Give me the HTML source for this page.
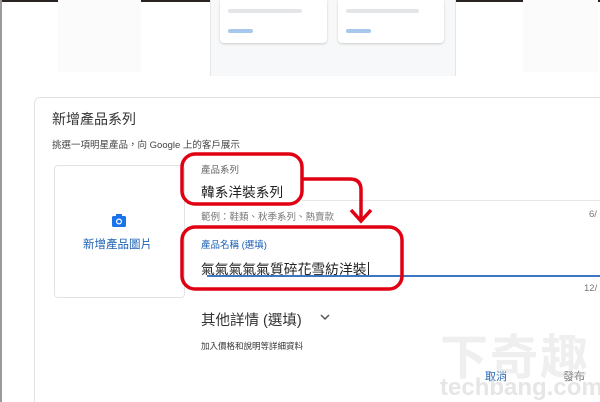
<!DOCTYPE html>
<html><head><meta charset="utf-8"><style>
html,body{margin:0;width:600px;height:402px;overflow:hidden}
body{background:#fff;position:relative;font-family:"Liberation Sans","Noto Sans CJK TC",sans-serif}
.a{position:absolute;white-space:nowrap}
</style></head><body>
<div class="a" style="left:0;top:0;width:600px;height:2px;background:#2a2522"></div>
<div class="a" style="left:0;top:0;width:2px;height:402px;background:#9a9a9a"></div>
<div class="a" style="left:58px;top:0;width:83px;height:72px;background:#fbfbfb"></div>
<div class="a" style="left:523px;top:0;width:75px;height:72px;background:#fbfbfb"></div>
<div class="a" style="left:210px;top:0;width:244px;height:76px;background:#f7f8f9;border-left:1px solid #e6e6e6;border-right:1px solid #e6e6e6"></div>
<div class="a" style="left:220px;top:0;width:107px;height:43px;background:#fff;border-radius:0 0 4px 4px;box-shadow:0 1px 2px #ccc"></div>
<div class="a" style="left:338px;top:0;width:106px;height:43px;background:#fff;border-radius:0 0 4px 4px;box-shadow:0 1px 2px #ccc"></div>
<div class="a" style="left:228px;top:9px;width:74px;height:4px;background:#e3e5e8;border-radius:2px"></div>
<div class="a" style="left:346px;top:9px;width:73px;height:4px;background:#e3e5e8;border-radius:2px"></div>
<div class="a" style="left:228px;top:29px;width:25px;height:4px;background:#a8c7ec;border-radius:2px"></div>
<div class="a" style="left:346px;top:29px;width:25px;height:4px;background:#a8c7ec;border-radius:2px"></div>

<div class="a" style="left:34px;top:97px;width:565px;height:305px;border:1px solid #e3e3e3;border-bottom:none;border-right:none;border-radius:6px 0 0 0;background:#fff"></div>
<div class="a" style="left:52px;top:109px;font-size:14px;color:#333">新增產品系列</div>
<div class="a" style="left:52px;top:137px;font-size:9.5px;color:#444">挑選一項明星產品，向 Google 上的客戶展示</div>
<div class="a" style="left:54px;top:165px;width:129px;height:131px;border:1px solid #e3e3e3;border-radius:4px"></div>
<svg class="a" style="left:112px;top:214px" width="14" height="13" viewBox="0 0 14 13"><rect x="0" y="2" width="14" height="11" rx="1.5" fill="#1a73e8"/><rect x="4" y="0" width="6" height="3" fill="#1a73e8"/><circle cx="7" cy="7.5" r="3" fill="#fff"/><circle cx="7" cy="7.5" r="1.8" fill="#1a73e8"/></svg>
<div class="a" style="left:83px;top:236px;font-size:11.5px;color:#1a5fb4">新增產品圖片</div>

<div class="a" style="left:201px;top:162px;font-size:9.5px;color:#666">產品系列</div>
<div class="a" style="left:201px;top:181px;font-size:13.7px;color:#222">韓系洋裝系列</div>
<div class="a" style="left:302px;top:200px;width:298px;height:1px;background:#e6e6e6"></div>
<div class="a" style="left:201px;top:209px;font-size:9.5px;color:#777">範例：鞋類、秋季系列、熱賣款</div>
<div class="a" style="left:589px;top:209px;font-size:9.5px;color:#777">6/</div>
<div class="a" style="left:201px;top:237px;font-size:9.5px;color:#1a5fb4">產品名稱 (選填)</div>
<div class="a" style="left:201px;top:258px;font-size:13.8px;color:#222">氣氣氣氣氣質碎花雪紡洋裝<span style="border-left:1px solid #222;margin-left:1px"></span></div>
<div class="a" style="left:207px;top:275px;width:393px;height:2px;background:#3d77c2"></div>
<div class="a" style="left:584px;top:283px;font-size:9.5px;color:#777">12/</div>
<div class="a" style="left:201px;top:309px;font-size:14.5px;color:#333">其他詳情 (選填)</div>
<svg class="a" style="left:320px;top:314px" width="10" height="7"><path d="M1 1 L5 5 L9 1" stroke="#555" stroke-width="1.5" fill="none"/></svg>
<div class="a" style="left:201px;top:340px;font-size:8.5px;color:#333">加入價格和說明等詳細資料</div>
<div class="a" style="left:485px;top:368px;font-size:11px;color:#1a5fb4">取消</div>
<div class="a" style="left:563px;top:368px;font-size:11px;color:#666">發布</div>
<div class="a" style="left:440px;top:335px;font-size:48px;line-height:48px;color:rgba(215,215,215,0.4);font-weight:bold;letter-spacing:2px">下奇趣</div>
<div class="a" style="left:440px;top:376px;font-size:24px;line-height:24px;color:rgba(205,205,205,0.5);font-weight:bold">techbang.com</div>

<svg class="a" style="left:0;top:0" width="600" height="402">
<rect x="182" y="154" width="120" height="50" rx="13" fill="none" stroke="#e00012" stroke-width="3.5"/>
<rect x="182" y="227" width="220" height="62" rx="13" fill="none" stroke="#e00012" stroke-width="3.5"/>
<path d="M303 179 H350 Q361 179 361 190 V220" fill="none" stroke="#e00012" stroke-width="3.5"/>
<path d="M351 210 L361 221 L371 210" fill="none" stroke="#e00012" stroke-width="3.5"/>
</svg>
</body></html>
